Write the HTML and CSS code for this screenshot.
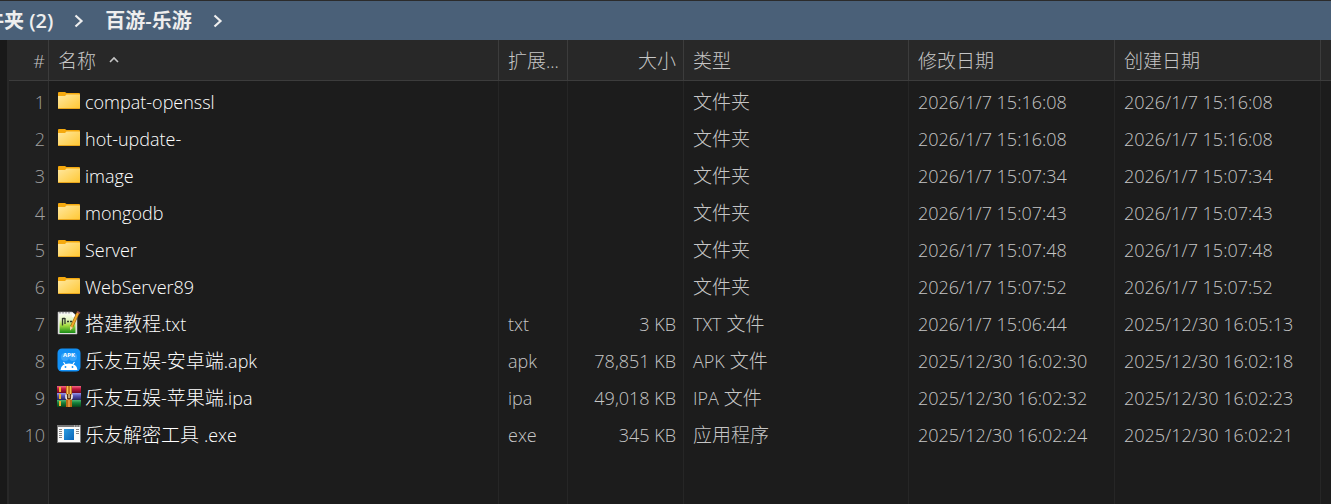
FILE: index.html
```
<!DOCTYPE html>
<html lang="zh-CN">
<head>
  <meta charset="UTF-8">
  <meta name="viewport" content="width=device-width, initial-scale=1.0">
  <title>百游-乐游</title>
  <link rel="stylesheet" href="styles.css">
</head>
<body>

  <!-- Shared icon shapes -->
  <svg class="icon-defs" aria-hidden="true">
    <defs>
      <linearGradient id="folderFill" x1="0" y1="0" x2="1" y2="1">
        <stop offset="0" stop-color="#ffe8a0"/>
        <stop offset="1" stop-color="#ffc732"/>
      </linearGradient>
      <symbol id="folder" viewBox="0 0 24 24">
        <path d="M1 4Q1 3 2 3H8L9.500 4H22Q23 4 23 5V10H1Z" fill="#f5a90e"/>
        <path d="M1 7H8L9.500 5.500H22.500Q23 5.500 23 6V19Q23 20 22 20H2Q1 20 1 19Z" fill="url(#folderFill)"/>
        <path d="M1.500 19.500H22.500" stroke="#eaa61c" stroke-width="1"/>
      </symbol>
      <symbol id="chevron" viewBox="0 0 10 14">
        <path d="M1.500 1.500L7.500 7L1.500 12.500" fill="none" stroke="currentColor" stroke-width="2.200"/>
      </symbol>
    </defs>
  </svg>

  <!-- Path bar -->
  <nav class="path-bar" aria-label="路径">
    <a class="crumb" href="#">件夹 (2)</a>
    <svg class="chevron" aria-hidden="true"><use href="#chevron"/></svg>
    <a class="crumb" href="#">百游-乐游</a>
    <svg class="chevron" aria-hidden="true"><use href="#chevron"/></svg>
  </nav>

  <!-- File list -->
  <main class="panel">
    <table class="file-list">
      <colgroup>
        <col class="col-num">
        <col class="col-name">
        <col class="col-ext">
        <col class="col-size">
        <col class="col-type">
        <col class="col-date">
        <col class="col-date">
        <col>
      </colgroup>
      <thead>
        <tr>
          <th class="num">#</th>
          <th aria-sort="ascending"><button class="sort-btn">名称<svg class="sort-mark" viewBox="0 0 10 7" aria-hidden="true"><path d="M1 6L5 2L9 6" fill="none" stroke="currentColor" stroke-width="1.600"/></svg></button></th>
          <th><button class="sort-btn">扩展<span class="latin">...</span></button></th>
          <th class="size"><button class="sort-btn">大小</button></th>
          <th><button class="sort-btn">类型</button></th>
          <th><button class="sort-btn">修改日期</button></th>
          <th><button class="sort-btn">创建日期</button></th>
          <th></th>
        </tr>
      </thead>
      <tbody>
        <tr class="spacer"><td></td><td></td><td></td><td></td><td></td><td></td><td></td><td></td></tr>
        <tr>
          <td class="num">1</td>
          <td class="name"><div class="file"><svg class="icon"><use href="#folder"/></svg><span class="latin">compat-openssl</span></div></td>
          <td></td>
          <td class="size"></td>
          <td class="type">文件夹</td>
          <td>2026/1/7 15:16:08</td>
          <td>2026/1/7 15:16:08</td>
          <td></td>
        </tr>
        <tr>
          <td class="num">2</td>
          <td class="name"><div class="file"><svg class="icon"><use href="#folder"/></svg><span class="latin">hot-update-</span></div></td>
          <td></td>
          <td class="size"></td>
          <td class="type">文件夹</td>
          <td>2026/1/7 15:16:08</td>
          <td>2026/1/7 15:16:08</td>
          <td></td>
        </tr>
        <tr>
          <td class="num">3</td>
          <td class="name"><div class="file"><svg class="icon"><use href="#folder"/></svg><span class="latin">image</span></div></td>
          <td></td>
          <td class="size"></td>
          <td class="type">文件夹</td>
          <td>2026/1/7 15:07:34</td>
          <td>2026/1/7 15:07:34</td>
          <td></td>
        </tr>
        <tr>
          <td class="num">4</td>
          <td class="name"><div class="file"><svg class="icon"><use href="#folder"/></svg><span class="latin">mongodb</span></div></td>
          <td></td>
          <td class="size"></td>
          <td class="type">文件夹</td>
          <td>2026/1/7 15:07:43</td>
          <td>2026/1/7 15:07:43</td>
          <td></td>
        </tr>
        <tr>
          <td class="num">5</td>
          <td class="name"><div class="file"><svg class="icon"><use href="#folder"/></svg><span class="latin">Server</span></div></td>
          <td></td>
          <td class="size"></td>
          <td class="type">文件夹</td>
          <td>2026/1/7 15:07:48</td>
          <td>2026/1/7 15:07:48</td>
          <td></td>
        </tr>
        <tr>
          <td class="num">6</td>
          <td class="name"><div class="file"><svg class="icon"><use href="#folder"/></svg><span class="latin">WebServer89</span></div></td>
          <td></td>
          <td class="size"></td>
          <td class="type">文件夹</td>
          <td>2026/1/7 15:07:52</td>
          <td>2026/1/7 15:07:52</td>
          <td></td>
        </tr>
        <tr>
          <td class="num">7</td>
          <td class="name">
            <div class="file">
              <!-- Text document with pencil -->
              <svg class="icon" viewBox="0 0 24 24">
                <defs>
                  <linearGradient id="noteFill" x1="0" y1="0" x2="0" y2="1">
                    <stop offset="0" stop-color="#f8fcf0"/>
                    <stop offset="0.300" stop-color="#e4f6c0"/>
                    <stop offset="0.600" stop-color="#a4dc40"/>
                    <stop offset="1" stop-color="#168a16"/>
                  </linearGradient>
                </defs>
                <path d="M1 1H15L20 5V23H1Z" fill="#f4f4f4" stroke="#aaa" stroke-width="0.600"/>
                <path d="M2.500 3H14.500L18.500 6.500V22H2.500Z" fill="url(#noteFill)"/>
                <path d="M15 1V6H20Z" fill="#fff"/>
                <path d="M3 1V2.500M6 1V2.500M9 1V2.500M12 1V2.500" stroke="#777"/>
                <path d="M5.500 7V14.500M8 7V13M5.500 7.500H8M10 10.500H12M13 10.500H15" fill="none" stroke="#2d3529" stroke-width="1.300"/>
                <path d="M21 2L14.500 16" stroke="#8f5a09" stroke-width="3"/>
                <path d="M21 2L14.500 16" stroke="#f0a92b" stroke-width="2"/>
                <path d="M19.500 1.500L20.500 0L23.500 1.500L22.800 3Z" fill="#a6564b"/>
                <path d="M13 15.300L16 16.700L13 19.500Z" fill="#f1d5a3"/>
              </svg>
              <span>搭建教程<span class="latin">.txt</span></span>
            </div>
          </td>
          <td>txt</td>
          <td class="size">3 KB</td>
          <td class="type"><span class="latin">TXT</span> 文件</td>
          <td>2026/1/7 15:06:44</td>
          <td>2025/12/30 16:05:13</td>
          <td></td>
        </tr>
        <tr>
          <td class="num">8</td>
          <td class="name">
            <div class="file">
              <!-- Android package -->
              <svg class="icon" viewBox="0 0 24 24">
                <rect x="0.500" y="0.500" width="23" height="23" rx="4.500" fill="#1290f5"/>
                <circle cx="8" cy="9" r="4" fill="#3ba5fa"/>
                <circle cx="16" cy="9" r="4" fill="#3ba5fa"/>
                <text class="apk-label" x="12" y="9" text-anchor="middle">APK</text>
                <path d="M3.500 22Q4 15.500 12 15.500Q20 15.500 20.500 22Z" fill="#fff"/>
                <path d="M6.500 14L8.500 17M17.500 14L15.500 17" stroke="#fff" stroke-width="1.200"/>
                <circle cx="8.500" cy="19" r="0.900" fill="#1290f5"/>
                <circle cx="15.500" cy="19" r="0.900" fill="#1290f5"/>
              </svg>
              <span>乐友互娱<span class="latin">-</span>安卓端<span class="latin">.apk</span></span>
            </div>
          </td>
          <td>apk</td>
          <td class="size">78,851 KB</td>
          <td class="type"><span class="latin">APK</span> 文件</td>
          <td>2025/12/30 16:02:30</td>
          <td>2025/12/30 16:02:18</td>
          <td></td>
        </tr>
        <tr>
          <td class="num">9</td>
          <td class="name">
            <div class="file">
              <!-- Archive: three books and a belt -->
              <svg class="icon" viewBox="0 0 24 24">
                <defs>
                  <linearGradient id="bookRed" x1="0" y1="0" x2="0" y2="1"><stop offset="0" stop-color="#f26a86"/><stop offset="0.400" stop-color="#c5183f"/><stop offset="1" stop-color="#690822"/></linearGradient>
                  <linearGradient id="bookBlue" x1="0" y1="0" x2="0" y2="1"><stop offset="0" stop-color="#9c9ae8"/><stop offset="0.400" stop-color="#5653b3"/><stop offset="1" stop-color="#25235f"/></linearGradient>
                  <linearGradient id="bookGreen" x1="0" y1="0" x2="0" y2="1"><stop offset="0" stop-color="#4fb573"/><stop offset="0.400" stop-color="#14813a"/><stop offset="1" stop-color="#07401b"/></linearGradient>
                </defs>
                <rect y="1" width="24" height="7" fill="url(#bookRed)"/>
                <rect y="8" width="24" height="7" fill="url(#bookBlue)"/>
                <rect y="15" width="24" height="7" fill="url(#bookGreen)"/>
                <path d="M3 2V7M3 9V14M3 16V21" stroke="#f0b22c" stroke-width="2"/>
                <rect x="9" y="1" width="6" height="21" fill="#b96a16"/>
                <path d="M10.500 1V9M13.500 1V9" stroke="#f6c052" stroke-width="1.400"/>
                <path d="M12 15V22" stroke="#df923c" stroke-width="2"/>
                <path d="M9 9.500V12Q9 14 10.500 14M15 9.500V12Q15 14 13.500 14" fill="none" stroke="#eee" stroke-width="1.600"/>
                <rect x="10" y="9" width="4" height="5" fill="#5c3417"/>
                <path d="M12 9V13" stroke="#f5e3aa" stroke-width="1.200"/>
              </svg>
              <span>乐友互娱<span class="latin">-</span>苹果端<span class="latin">.ipa</span></span>
            </div>
          </td>
          <td>ipa</td>
          <td class="size">49,018 KB</td>
          <td class="type"><span class="latin">IPA</span> 文件</td>
          <td>2025/12/30 16:02:32</td>
          <td>2025/12/30 16:02:23</td>
          <td></td>
        </tr>
        <tr>
          <td class="num">10</td>
          <td class="name">
            <div class="file">
              <!-- Program window -->
              <svg class="icon" viewBox="0 0 24 24">
                <defs>
                  <linearGradient id="appFill" x1="0" y1="0" x2="1" y2="1"><stop offset="0" stop-color="#2b9be0"/><stop offset="1" stop-color="#0763b8"/></linearGradient>
                </defs>
                <rect x="0.500" y="3.500" width="23" height="17" fill="#fafafa" stroke="#777"/>
                <path d="M0 4H24" stroke="#777" stroke-width="2"/>
                <path d="M17 4H18M19.500 4H20.500M22 4H23" stroke="#ddd"/>
                <rect x="7" y="7" width="10" height="11" fill="url(#appFill)"/>
                <path d="M2 7.500H5M2 9.500H5M2 11.500H5M2 13.500H5M2 15.500H5M19 7.500H22M19 9.500H22M19 11.500H22" stroke="#858585"/>
              </svg>
              <span>乐友解密工具 <span class="latin">.exe</span></span>
            </div>
          </td>
          <td>exe</td>
          <td class="size">345 KB</td>
          <td class="type">应用程序</td>
          <td>2025/12/30 16:02:24</td>
          <td>2025/12/30 16:02:21</td>
          <td></td>
        </tr>
        <tr class="filler"><td></td><td></td><td></td><td></td><td></td><td></td><td></td><td></td></tr>
      </tbody>
    </table>
  </main>

</body>
</html>
```

FILE: styles.css
```
/* Basic Reset */
* {
  margin: 0;
  padding: 0;
  box-sizing: border-box;
}
body {
  display: flex;
  flex-direction: column;
  height: 100vh;
  overflow-x: hidden;
  background-color: #191919;
  color: #c6c6c6;
  font-family: "Open Sans", "Noto Sans CJK SC", sans-serif;
  font-size: 18px;
  font-weight: 300;
  line-height: 24px;
}
.icon-defs {
  position: absolute;
  width: 0;
  height: 0;
}

/* Path Bar */
.path-bar {
  display: flex;
  flex: none;
  align-items: center;
  gap: 21px;
  height: 40px;
  margin-left: -16px;
  border-top: 1px solid #2b2b2b;
  background-color: #4a6078;
  color: #eee;
}
.crumb {
  color: inherit;
  font-size: 20px;
  font-weight: 600;
  text-decoration: none;
  white-space: nowrap;
}
.chevron {
  width: 10px;
  height: 14px;
}

/* File List */
.panel {
  flex: 1;
  padding-left: 7px;
}
.file-list {
  width: 100%;
  height: calc(100vh - 40px);
  table-layout: fixed;
  border-collapse: separate;
  border-spacing: 0;
  border-left: 2px solid #282828;
  background-color: #1c1c1c;
}
.col-num {
  width: 40px;
}
.col-name {
  width: 450px;
}
.col-ext {
  width: 69px;
}
.col-size {
  width: 116px;
}
.col-type {
  width: 225px;
}
.col-date {
  width: 206px;
}
th {
  height: 41px;
  padding: 2px 9px 0;
  border-right: 1px solid #3c3c3c;
  border-bottom: 1px solid #3c3c3c;
  background-color: #282828;
  font-weight: inherit;
  text-align: left;
  white-space: nowrap;
}
td {
  height: 37px;
  padding: 0 9px;
  border-right: 1px solid #262626;
  white-space: nowrap;
}
th:last-child,
td:last-child {
  border-right: none;
}
.sort-btn {
  border: none;
  background: none;
  color: inherit;
  font: inherit;
  font-size: 19px;
  cursor: pointer;
}
.sort-btn:hover {
  color: #fff;
}
.sort-mark {
  width: 10px;
  height: 7px;
  margin-left: 13px;
  vertical-align: 5px;
}
.num {
  padding-left: 3px;
  padding-right: 3px;
  text-align: right;
}
td:first-child {
  border-right-color: #303030;
  background-color: #202020;
}
td.num {
  color: #a0a0a0;
}
.size {
  padding-left: 7px;
  padding-right: 7px;
  text-align: right;
}
.type {
  font-size: 19px;
}
.name {
  padding-left: 8px;
  color: #fff;
  font-size: 19px;
}
.latin {
  font-size: 18px;
}
.file {
  display: flex;
  align-items: center;
  gap: 4px;
}
.icon {
  flex: none;
  width: 24px;
  height: 24px;
  margin-bottom: 2px;
}
.apk-label {
  fill: #fff;
  font-size: 6px;
  font-weight: bold;
}
.spacer td {
  height: 2px;
}
.filler td {
  height: auto;
}
```
